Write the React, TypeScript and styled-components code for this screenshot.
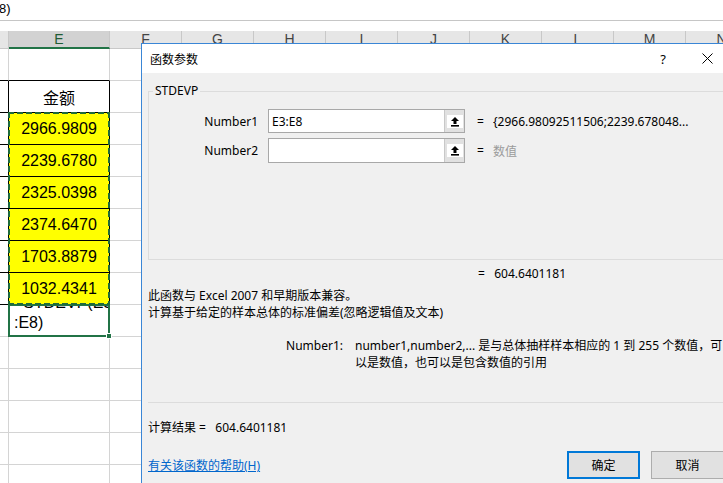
import { Fragment } from "react";
import styled, { createGlobalStyle } from "styled-components";

const GlobalStyle = createGlobalStyle`
  html, body {
    margin: 0;
    padding: 0;
    background: #ffffff;
  }
  * {
    box-sizing: border-box;
  }
`;

const Screen = styled.div`
  position: relative;
  width: 723px;
  height: 483px;
  overflow: hidden;
  background: #ffffff;
  font-family: "Liberation Sans", "Noto Sans CJK SC", sans-serif;
`;

const FormulaBar = styled.div`
  height: 21px;
  border-bottom: 1px solid #c6c6c6;
  font-size: 13px;
  line-height: 18px;
  color: #000;
  white-space: nowrap;
  overflow: hidden;
`;

const FormulaText = styled.span`
  display: inline-block;
  margin-left: -1px;
`;

const Gap = styled.div`
  height: 10px;
`;

const Sheet = styled.div`
  display: grid;
  grid-template-columns: 9px 101px repeat(9, 72px);
  grid-template-rows: 18px repeat(14, 32px);
`;

const HeadCell = styled.div<{ $active?: boolean }>`
  background: ${(p) => (p.$active ? "#d2d2d2" : "#e6e6e6")};
  border-right: 1px solid #c8c8c8;
  border-bottom: ${(p) => (p.$active ? "2px solid #217346" : "1px solid #c8c8c8")};
  color: ${(p) => (p.$active ? "#1f5c35" : "#444")};
  font-size: 14px;
  line-height: 17px;
  text-align: center;
  overflow: hidden;
`;

const Cell = styled.div<{ $fill?: string; $right?: string; $bottom?: string }>`
  position: relative;
  background: ${(p) => p.$fill ?? "transparent"};
  border-right: 1px solid ${(p) => p.$right ?? "#d4d4d4"};
  border-bottom: 1px solid ${(p) => p.$bottom ?? "#d4d4d4"};
  font-size: 16px;
  display: flex;
  align-items: center;
  justify-content: center;
  color: #000;
`;

const FormulaCell = styled.div`
  position: relative;
  margin: -1px 0 0 -1px;
  border: 2px solid #217346;
  padding: 0 0 2px 4px;
  font-size: 16px;
  line-height: 20px;
  z-index: 2;
  background: #fff;
`;

const CellClip = styled.div`
  overflow: hidden;
  display: flex;
  flex-direction: column;
  justify-content: flex-end;
  height: 100%;
`;

const FillHandle = styled.div`
  position: absolute;
  right: -4px;
  bottom: -4px;
  width: 6px;
  height: 6px;
  background: #217346;
  border: 1px solid #fff;
`;

// marching ants around the copied range E3:E8
const Ants = styled.div<{ $rows: number }>`
  position: absolute;
  left: -1px;
  top: -1px;
  width: 102px;
  height: ${(p) => p.$rows * 32 + 1}px;
  z-index: 3;
  pointer-events: none;
  background:
    repeating-linear-gradient(90deg, #1e6b3b 0 6px, transparent 6px 9px) top left / 100% 2px no-repeat,
    repeating-linear-gradient(90deg, #1e6b3b 0 6px, transparent 6px 9px) bottom left / 100% 2px no-repeat,
    repeating-linear-gradient(180deg, #1e6b3b 0 6px, transparent 6px 9px) top left / 2px 100% no-repeat,
    repeating-linear-gradient(180deg, #1e6b3b 0 6px, transparent 6px 9px) top right / 2px 100% no-repeat;
`;

/* dialog */

const Dialog = styled.div`
  position: absolute;
  left: 141px;
  top: 43px;
  width: 589px;
  height: 460px;
  border: 1px solid #3a86d6;
  background: #f0f0f0;
  display: flex;
  flex-direction: column;
  font-family: "Noto Sans", "Noto Sans CJK SC", sans-serif;
  font-size: 12px;
  color: #000;
  z-index: 10;
`;

const TitleBar = styled.div`
  height: 29px;
  background: #fff;
  display: flex;
  align-items: center;
  padding-left: 8px;
`;

const Title = styled.span`
  flex: 1;
`;

const TitleButton = styled.span`
  width: 44px;
  height: 29px;
  display: flex;
  align-items: center;
  justify-content: center;
  font-size: 13px;
`;

const Body = styled.div`
  flex: 1;
  display: flex;
  flex-direction: column;
  padding: 0 5px 0 6px;
`;

const Group = styled.fieldset`
  margin: 10px 0 0 0;
  padding: 10px 0 96px 0;
  border: 1px solid #dcdcdc;
  min-width: 0;
`;

const Legend = styled.legend`
  margin-left: 4px;
  padding: 0 2px;
  line-height: 16px;
`;

const ParamGrid = styled.div`
  display: grid;
  grid-template-columns: 119px 197px 28px 1fr;
  grid-template-rows: 24px 25px;
  row-gap: 5px;
  align-items: center;
  white-space: nowrap;
`;

const ParamLabel = styled.span`
  text-align: right;
  padding-right: 10px;
`;

const InputBox = styled.div`
  height: 100%;
  background: #fff;
  border: 1px solid #a8a8a8;
  display: flex;
  align-items: stretch;
`;

const InputText = styled.span`
  flex: 1;
  padding-left: 3px;
  display: flex;
  align-items: center;
`;

const RefButton = styled.span`
  width: 20px;
  background: #e1e1e1;
  border-left: 1px solid #c8c8c8;
  display: flex;
  align-items: center;
  justify-content: center;
`;

const Eq = styled.span`
  padding-left: 12px;
`;

const Value = styled.span<{ $muted?: boolean }>`
  color: ${(p) => (p.$muted ? "#9b9b9b" : "#000")};
  overflow: hidden;
`;

const ResultLine = styled.div`
  margin-top: 5px;
  padding-left: 330px;
  line-height: 17px;
  white-space: pre;
`;

const Desc = styled.div`
  margin-top: 5px;
  line-height: 17px;
`;

const ArgHelp = styled.div`
  margin-top: 16px;
  display: grid;
  grid-template-columns: 195px 1fr;
  column-gap: 12px;
  line-height: 17px;
  white-space: nowrap;
`;

const ArgName = styled.span`
  text-align: right;
`;

const Separator = styled.div`
  margin-top: 31px;
  margin-right: -6px;
  border-top: 1px solid #dcdcdc;
`;

const Computed = styled.div`
  margin-top: 16px;
  line-height: 17px;
  white-space: pre;
`;

const Footer = styled.div`
  margin-top: 15px;
  display: flex;
  align-items: center;
  gap: 11px;
`;

const HelpLink = styled.a`
  flex: 1;
  color: #0066cc;
  text-decoration: underline;
`;

const Button = styled.button<{ $primary?: boolean }>`
  width: 73px;
  height: 28px;
  background: #e1e1e1;
  border: ${(p) => (p.$primary ? "2px solid #0078d7" : "1px solid #adadad")};
  font-family: inherit;
  font-size: 12px;
  color: #000;
  padding: 0;
`;

const UpIcon = () => (
  <svg width="16" height="13" viewBox="0 0 16 13">
    <rect width="16" height="13" fill="#fff" />
    <path d="M8 2 L4 6 H6.5 V9 H9.5 V6 H12 Z" fill="#000" />
    <rect x="4" y="10" width="8" height="1.6" fill="#000" />
  </svg>
);

const CloseIcon = () => (
  <svg width="11" height="11" viewBox="0 0 11 11">
    <path d="M0.5 0.5 L10.5 10.5 M10.5 0.5 L0.5 10.5" stroke="#000" strokeWidth="1" />
  </svg>
);

const columns = ["D", "E", "F", "G", "H", "I", "J", "K", "L", "M", "N"];
const amounts = ["2966.9809", "2239.6780", "2325.0398", "2374.6470", "1703.8879", "1032.4341"];
const otherCols = columns.slice(2);

export default function App() {
  return (
    <Screen>
      <GlobalStyle />
      <FormulaBar>
        <FormulaText>8)</FormulaText>
      </FormulaBar>
      <Gap />
      <Sheet>
        {columns.map((c) => (
          <HeadCell key={c} $active={c === "E"}>
            {c === "D" ? "" : c}
          </HeadCell>
        ))}

        {/* row 1 */}
        <Cell $bottom="#000" />
        <Cell $bottom="#000" />
        {otherCols.map((c) => (
          <Cell key={"r1" + c} />
        ))}

        {/* row 2 */}
        <Cell $right="#000" $bottom="#000" />
        <Cell $right="#000" $bottom="#000">
          金额
        </Cell>
        {otherCols.map((c) => (
          <Cell key={"r2" + c} />
        ))}

        {amounts.map((a, i) => (
          <Fragment key={a}>
            <Cell $right="#000" $bottom="#000" />
            <Cell $fill="#ffff00" $right="#000" $bottom="#000">
              {a}
              {i === 0 && <Ants $rows={amounts.length} />}
            </Cell>
            {otherCols.map((c) => (
              <Cell key={c} />
            ))}
          </Fragment>
        ))}

        {/* row 9 */}
        <Cell />
        <FormulaCell>
          <CellClip>
            <span>=STDEVP(E3</span>
            <span>:E8)</span>
          </CellClip>
          <FillHandle />
        </FormulaCell>
        {otherCols.map((c) => (
          <Cell key={"r9" + c} />
        ))}

        {[10, 11, 12, 13, 14].map((r) =>
          columns.map((c) => <Cell key={"r" + r + c} />)
        )}
      </Sheet>

      <Dialog>
        <TitleBar>
          <Title>函数参数</Title>
          <TitleButton>?</TitleButton>
          <TitleButton>
            <CloseIcon />
          </TitleButton>
        </TitleBar>
        <Body>
          <Group>
            <Legend>STDEVP</Legend>
            <ParamGrid>
              <ParamLabel>Number1</ParamLabel>
              <InputBox>
                <InputText>E3:E8</InputText>
                <RefButton>
                  <UpIcon />
                </RefButton>
              </InputBox>
              <Eq>=</Eq>
              <Value>{"{2966.98092511506;2239.678048..."}</Value>

              <ParamLabel>Number2</ParamLabel>
              <InputBox>
                <InputText />
                <RefButton>
                  <UpIcon />
                </RefButton>
              </InputBox>
              <Eq>=</Eq>
              <Value $muted>数值</Value>
            </ParamGrid>
          </Group>

          <ResultLine>{"=   604.6401181"}</ResultLine>

          <Desc>
            此函数与 Excel 2007 和早期版本兼容。
            <br />
            计算基于给定的样本总体的标准偏差(忽略逻辑值及文本)
          </Desc>

          <ArgHelp>
            <ArgName>Number1:</ArgName>
            <span>
              number1,number2,... 是与总体抽样样本相应的 1 到 255 个数值，可
              <br />
              以是数值，也可以是包含数值的引用
            </span>
          </ArgHelp>

          <Separator />

          <Computed>{"计算结果 =   604.6401181"}</Computed>

          <Footer>
            <HelpLink>有关该函数的帮助(H)</HelpLink>
            <Button $primary>确定</Button>
            <Button>取消</Button>
          </Footer>
        </Body>
      </Dialog>
    </Screen>
  );
}
